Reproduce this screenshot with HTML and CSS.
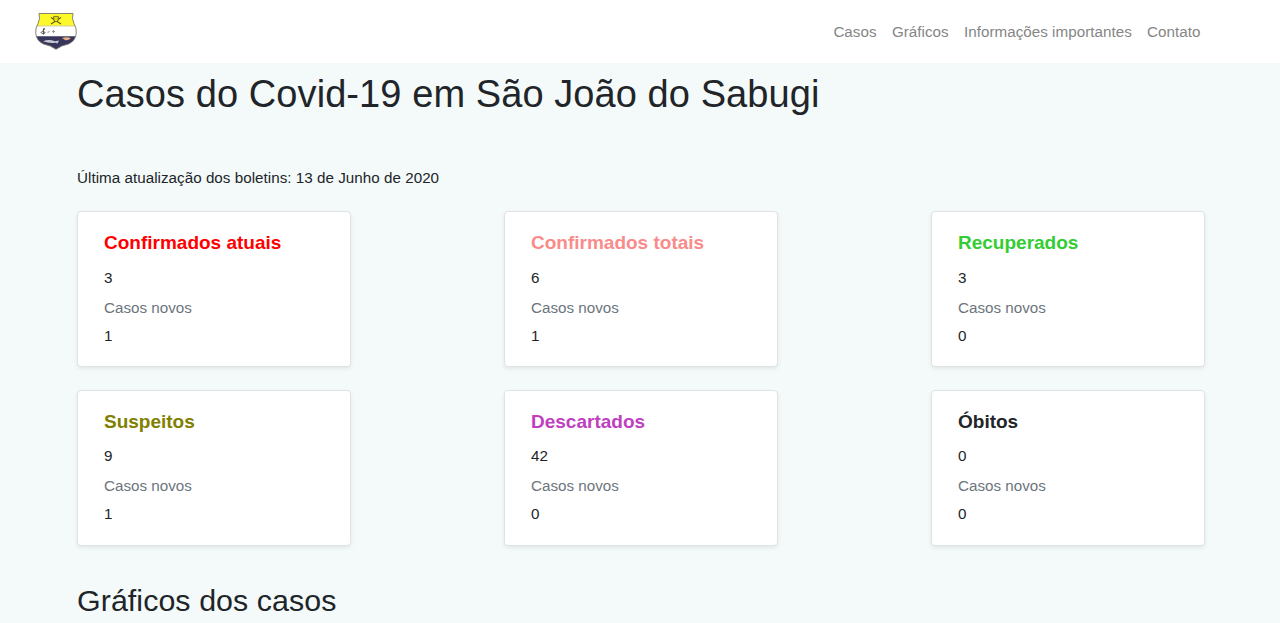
FILE: index.html
```html
<!DOCTYPE html>
<html lang="pt-br">
<head>
<meta charset="utf-8">
<title>Covid-19 em São João do Sabugi</title>
<link rel="stylesheet" href="styles.css">
</head>
<body>
<header class="navbar">
  <a class="brand" aria-label="Início">
    <svg class="crest" viewBox="0 0 42 38">
      <defs><clipPath id="shield"><path d="M4 .5H38Q36.500 6 39 10.500Q41.700 15 41.300 20Q40.500 28 33.500 31Q26 32.500 21 36.300Q16 32.500 8.500 31Q1.500 28 .7 20Q.3 15 3 10.500Q5.500 6 4 .5Z"/></clipPath></defs>
      <g clip-path="url(#shield)">
        <path fill="#fff" d="M0 0H42V38H0z"/>
        <path fill="#fdf829" d="M0 0H42V12.700H0z"/>
        <path fill="#38375b" d="M0 23.200H42V38H0z"/>
        <path d="M0 13H42" stroke="#b5ae65" stroke-width=".6"/>
        <path d="M16 4.500L26 11M26 4.500L16 11" stroke="#665f10" stroke-width="1.200"/>
        <path d="M18.500 3.800Q21 2.800 23.500 3.800L23 7.500L21 9L19 7.500Z" fill="#e5db27" stroke="#6c6517" stroke-width=".9"/>
        <path d="M8.500 21.500V15.500Q11 15 8.500 17.500Q4 20 8 20.500Q12 20 8.500 18.500" fill="none" stroke="#555" stroke-width="1"/>
        <path d="M12.500 19.500L14.500 18.500M18.500 17V20M17 18.500H20" stroke="#999" stroke-width="1.100"/>
        <path d="M8 28.200Q14 26 20 28.300L24 27.500L22.500 30.500L20 29.700Q14 30.500 8 28.200Z" fill="#c5c9d3"/>
        <path d="M27 25Q31 23.500 36 25Q33 28 30 27Z" fill="#e8ad80"/>
      </g>
      <path d="M4 .5H38Q36.500 6 39 10.500Q41.700 15 41.300 20Q40.500 28 33.500 31Q26 32.500 21 36.300Q16 32.500 8.500 31Q1.500 28 .7 20Q.3 15 3 10.500Q5.500 6 4 .5Z" fill="none" stroke="#77756c" stroke-width=".9"/>
    </svg>
  </a>
  <nav class="menu"><a>Casos</a><a>Gráficos</a><a>Informações importantes</a><a>Contato</a></nav>
</header>
<main class="container">
  <h1 class="title">Casos do Covid-19 em São João do Sabugi</h1>
  <p class="updated">Última atualização dos boletins: 13 de Junho de 2020</p>
  <section class="cards">
    <article class="card"><h5 class="card-title red">Confirmados atuais</h5><p class="total">3</p><h6 class="subtitle">Casos novos</h6><p class="new">1</p></article>
    <article class="card"><h5 class="card-title pink">Confirmados totais</h5><p class="total">6</p><h6 class="subtitle">Casos novos</h6><p class="new">1</p></article>
    <article class="card"><h5 class="card-title green">Recuperados</h5><p class="total">3</p><h6 class="subtitle">Casos novos</h6><p class="new">0</p></article>
    <article class="card"><h5 class="card-title olive">Suspeitos</h5><p class="total">9</p><h6 class="subtitle">Casos novos</h6><p class="new">1</p></article>
    <article class="card"><h5 class="card-title purple">Descartados</h5><p class="total">42</p><h6 class="subtitle">Casos novos</h6><p class="new">0</p></article>
    <article class="card"><h5 class="card-title">Óbitos</h5><p class="total">0</p><h6 class="subtitle">Casos novos</h6><p class="new">0</p></article>
  </section>
  <h2 class="charts-title">Gráficos dos casos</h2>
</main>
</body>
</html>
```
FILE: styles.css
```css
* { box-sizing: border-box; }
html { overflow: hidden; }
body { margin: 0; background: #f4faf9; color: #212529; font: 15.2px/23px "Liberation Sans", Arial, sans-serif; letter-spacing: .03px; }
h1, h2, h5, h6, p { margin: 0; font-weight: 400; }
.navbar { display: flex; justify-content: space-between; align-items: center; height: 63px; padding: 0 79.5px 0 35px; background: #fff; }
.brand { display: flex; }
.crest { width: 42px; height: 38px; }
.menu { display: flex; gap: 15.3px; color: #868686; }
.container { padding: 8px 75px 0 77px; }
.title { font-size: 38px; line-height: 46px; letter-spacing: .08px; white-space: nowrap; }
.updated { margin-top: 49px; }
.cards { display: grid; grid-template-columns: repeat(3, 274px); justify-content: space-between; row-gap: 23px; margin-top: 22.4px; }
.card { height: 155.8px; padding: 19px 26px; background: #fff; border: 1px solid #dfe3e3; border-radius: 4px; box-shadow: 0 2px 4px rgba(0, 0, 0, .075); }
.card-title { font-size: 19px; line-height: 23px; letter-spacing: 0; font-weight: 700; }
.total { margin-top: 11.6px; }
.subtitle { margin-top: 7.4px; font-size: 15.2px; letter-spacing: 0; color: #6c757d; }
.new { margin-top: 5px; }
.card:nth-child(n+4) .total { margin-top: 11px; }
.card:nth-child(n+4) .subtitle { margin-top: 7px; }
.red { color: #f00; }
.pink { color: #fa8b8b; }
.green { color: #32cd32; }
.olive { color: #808000; }
.purple { color: #bf3fbf; }
.charts-title { margin-top: 35px; font-size: 30.4px; line-height: 38px; letter-spacing: .06px; }
```
